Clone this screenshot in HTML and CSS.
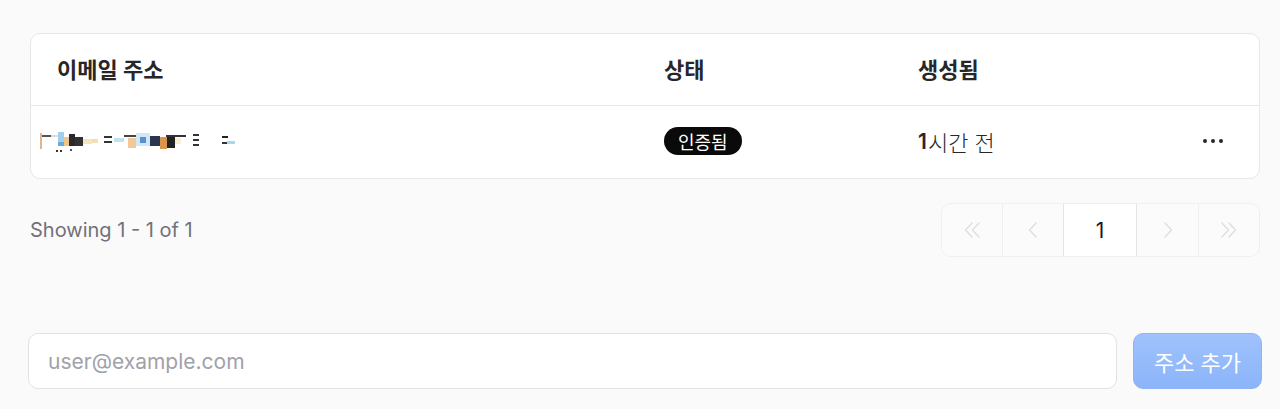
FILE: index.html
```html
<!DOCTYPE html>
<html lang="ko">
<head>
<meta charset="utf-8">
<title>이메일 주소</title>
<link rel="stylesheet" href="styles.css">
</head>
<body>
<main class="page">
  <section class="card">
    <div class="row head">
      <div class="cell">이메일 주소</div>
      <div class="cell">상태</div>
      <div class="cell">생성됨</div>
      <div class="cell"></div>
    </div>
    <div class="row body">
      <div class="cell email">
        <svg class="mosaic" width="200" height="22" viewBox="0 0 200 22" aria-label="masked email">
          <rect x="0" y="3" width="2" height="16" fill="#e6b48a"/>
          <rect x="2" y="5" width="9" height="2" fill="#555"/>
          <rect x="11" y="5" width="7" height="2" fill="#ddd"/>
          <rect x="18" y="2" width="6" height="14" fill="#9fd0f0"/>
          <rect x="18" y="12" width="6" height="4" fill="#6aa9d8"/>
          <rect x="24" y="7" width="6" height="9" fill="#f1c48d"/>
          <rect x="29" y="4" width="6" height="12" fill="#2a2a2a"/>
          <rect x="35" y="7" width="8" height="9" fill="#333"/>
          <rect x="43" y="9" width="9" height="5" fill="#f5e6bf"/>
          <rect x="52" y="9" width="6" height="4" fill="#f3deb0"/>
          <rect x="64" y="6" width="8" height="2" fill="#333"/>
          <rect x="64" y="11" width="8" height="2" fill="#333"/>
          <rect x="74" y="8" width="10" height="4" fill="#bfe3f2"/>
          <rect x="84" y="5" width="12" height="2" fill="#444"/>
          <rect x="88" y="8" width="8" height="10" fill="#f0c89a"/>
          <rect x="96" y="3" width="14" height="13" fill="#cfe8f8"/>
          <rect x="100" y="7" width="6" height="6" fill="#5b8fc8"/>
          <rect x="110" y="6" width="10" height="10" fill="#2a3550"/>
          <rect x="120" y="7" width="7" height="12" fill="#d9954c"/>
          <rect x="126" y="5" width="20" height="2" fill="#333"/>
          <rect x="127" y="7" width="8" height="11" fill="#222"/>
          <rect x="135" y="8" width="6" height="6" fill="#f7f0d9"/>
          <rect x="153" y="4" width="6" height="2" fill="#333"/>
          <rect x="153" y="9" width="6" height="2" fill="#333"/>
          <rect x="153" y="14" width="6" height="2" fill="#333"/>
          <rect x="182" y="6" width="6" height="2" fill="#222"/>
          <rect x="182" y="12" width="5" height="2" fill="#333"/>
          <rect x="187" y="11" width="8" height="3" fill="#a8d8f0"/>
          <rect x="16" y="20" width="2" height="2" fill="#333"/>
          <rect x="20" y="20" width="2" height="2" fill="#333"/>
          <rect x="30" y="19" width="2" height="2" fill="#555"/>
        </svg>
      </div>
      <div class="cell"><span class="badge">인증됨</span></div>
      <div class="cell created"><span class="num">1</span>시간 전</div>
      <div class="cell actions"><span class="dots" aria-label="more"><i></i><i></i><i></i></span></div>
    </div>
  </section>

  <div class="footer">
    <div class="showing">Showing 1 - 1 of 1</div>
    <nav class="pager">
      <button class="pg nav" disabled aria-label="first">
        <svg width="22" height="22" viewBox="0 0 22 22"><path d="M11 4 4.5 11l6.5 7M18 4l-6.5 7 6.5 7" fill="none" stroke="currentColor" stroke-width="1.4" stroke-linecap="round" stroke-linejoin="round"/></svg>
      </button>
      <button class="pg nav" disabled aria-label="previous">
        <svg width="22" height="22" viewBox="0 0 22 22"><path d="M14 4 7.5 11l6.5 7" fill="none" stroke="currentColor" stroke-width="1.4" stroke-linecap="round" stroke-linejoin="round"/></svg>
      </button>
      <button class="pg current">1</button>
      <button class="pg nav" disabled aria-label="next">
        <svg width="22" height="22" viewBox="0 0 22 22"><path d="M8 4l6.5 7L8 18" fill="none" stroke="currentColor" stroke-width="1.4" stroke-linecap="round" stroke-linejoin="round"/></svg>
      </button>
      <button class="pg nav" disabled aria-label="last">
        <svg width="22" height="22" viewBox="0 0 22 22"><path d="M4 4l6.5 7L4 18M11 4l6.5 7-6.5 7" fill="none" stroke="currentColor" stroke-width="1.4" stroke-linecap="round" stroke-linejoin="round"/></svg>
      </button>
    </nav>
  </div>

  <form class="add">
    <input class="input" type="email" placeholder="user@example.com">
    <button class="submit" type="button">주소 추가</button>
  </form>
</main>
</body>
</html>
```

FILE: styles.css
```css
* { box-sizing: border-box; }

html, body {
  margin: 0;
  padding: 0;
  background: #fafafa;
  font-family: Inter, "Noto Sans CJK KR", sans-serif;
  color: #27272a;
}

.page {
  padding: 33px 18px 0 28px;
  height: 409px;
  overflow: hidden;
}

.card {
  margin: 0 2px;
  background: #ffffff;
  border: 1px solid #e7e7e9;
  border-radius: 10px;
}

.row {
  display: grid;
  grid-template-columns: 607px 254px 1fr 68px;
  padding-right: 12px;
  align-items: center;
}

.row.head {
  height: 72px;
  padding-bottom: 4px;
  border-bottom: 1px solid #e7e7e9;
  font-weight: 700;
  font-size: 22px;
  color: #27272a;
}

.row.body {
  height: 72px;
  padding-bottom: 2px;
  font-size: 22px;
}

.cell {
  padding-left: 26px;
  display: flex;
  align-items: center;
}

.cell.email {
  padding-left: 9px;
}

.mosaic { display: block; }

.badge {
  display: inline-flex;
  align-items: center;
  height: 28px;
  padding: 0 14px;
  border-radius: 14px;
  background: #0a0a0a;
  color: #ffffff;
  font-size: 18px;
  font-weight: 400;
}

.created {
  color: #27272a;
  font-weight: 300;
}

.created .num {
  font-size: 21px;
  font-weight: 600;
  margin-right: 1px;
}

.actions {
  padding-left: 0;
  justify-content: center;
}

.dots {
  display: flex;
  gap: 4px;
}

.dots i {
  width: 4px;
  height: 4px;
  border-radius: 50%;
  background: #27272a;
}

.footer {
  display: flex;
  justify-content: space-between;
  align-items: center;
  margin: 24px 2px 0 2px;
}

.showing {
  font-size: 20px;
  color: #71717a;
}

.pager {
  display: flex;
  height: 54px;
  border: 1px solid #efeff1;
  border-radius: 10px;
  overflow: hidden;
}

.pg {
  width: 61px;
  height: 100%;
  border: 0;
  border-left: 1px solid #efeff1;
  background: #fbfbfb;
  color: #dedee2;
  display: flex;
  align-items: center;
  justify-content: center;
  padding: 0;
  font-family: inherit;
}

.pg:first-child { border-left: 0; width: 60px; }

.pg.current {
  width: 74px;
  background: #ffffff;
  border-left: 1px solid #e4e4e7;
  border-right: 1px solid #e4e4e7;
  color: #18181b;
  font-size: 21px;
}

.pg.current + .pg { border-left: 0; }

.add {
  display: flex;
  gap: 16px;
  margin-top: 76px;
}

.input {
  flex: 1;
  height: 56px;
  border: 1px solid #e2e2e5;
  border-radius: 10px;
  background: #ffffff;
  padding: 0 19px;
  font-family: Inter, sans-serif;
  font-size: 21px;
  color: #27272a;
  outline: none;
}

.input::placeholder { color: #a1a1aa; }

.submit {
  width: 129px;
  height: 56px;
  border: 1px solid #8fb3f5;
  border-radius: 10px;
  background: linear-gradient(#9fc2fc, #8cb4fa);
  color: #ffffff;
  font-family: "Noto Sans CJK KR", sans-serif;
  font-size: 22px;
  padding: 0;
}
```
